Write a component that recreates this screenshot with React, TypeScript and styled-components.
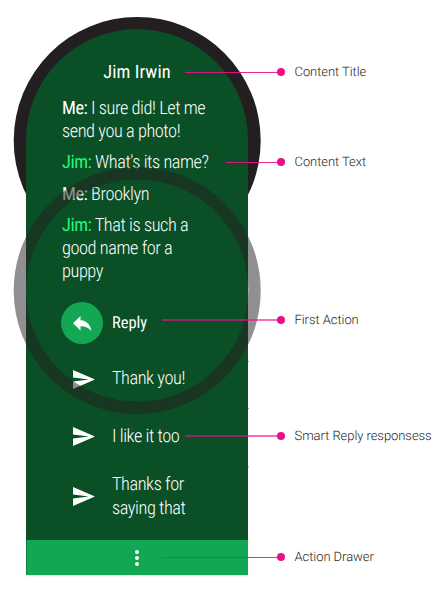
import React from "react";
import styled, { createGlobalStyle } from "styled-components";

const Global = createGlobalStyle`
  * { box-sizing: border-box; }
  body {
    margin: 0;
    background: #fff;
    font-family: Roboto, "Liberation Sans", sans-serif;
    text-rendering: geometricPrecision;
  }
`;

const Page = styled.main`
  position: relative;
  width: 447px;
  height: 597px;
  padding: 29px 0 0 26px;
  overflow: hidden;
`;

const Dial = styled.svg`
  position: absolute;
  left: 0;
  top: 0;
  width: 447px;
  height: 597px;
  pointer-events: none;
`;

const Shade = styled.div`
  position: relative;
  width: 222px;
  border-radius: 111px 111px 0 0;
  box-shadow: 0 2px 2px -1px rgba(0, 0, 0, 0.12);
`;

const Card = styled.section`
  display: flex;
  flex-direction: column;
  height: 546px;
  background: #0a4f26;
  border-radius: 111px 111px 0 0;
  color: #fff;
  font-weight: 300;
  font-stretch: 75%;
  font-size: 18.4px;
  letter-spacing: -0.46px;
  line-height: 23.2px;
  overflow: hidden;
`;

const Title = styled.h1`
  margin: 0;
  padding-top: 32px;
  height: 68px;
  text-align: center;
  font-size: 18.4px;
  line-height: 23px;
  font-weight: 430;
  letter-spacing: 0.1px;
`;

const Chat = styled.div`
  display: flex;
  flex-direction: column;
  gap: 8px;
  height: 203px;
  padding-left: 36px;
`;

const Message = styled.p`
  margin: 0;
  white-space: nowrap;
`;

const Sender = styled.span<{ $own?: boolean }>`
  color: ${(p) => (p.$own ? "#fff" : "#1dfb76")};
  font-weight: 420;
`;

const Action = styled.div<{ $height: number }>`
  display: grid;
  grid-template-columns: 42px 1fr;
  column-gap: 9px;
  align-items: center;
  height: ${(p) => p.$height}px;
  padding-left: 35px;
  white-space: nowrap;
`;

const ActionLabel = styled.span`
  padding-top: 1px;
`;

const ReplyLabel = styled.span`
  padding-top: 2px;
  font-size: 16.4px;
  font-weight: 450;
  letter-spacing: 0;
`;

const ReplyButton = styled.span`
  display: grid;
  place-items: center;
  width: 42px;
  height: 42px;
  border-radius: 50%;
  background: #13a653;
`;

const SendIcon = styled.svg`
  margin: 1px 0 0 12px;
  width: 22px;
  height: 19px;
`;

const Drawer = styled.footer`
  display: grid;
  place-items: center;
  height: 35px;
  margin-top: auto;
  padding-right: 1px;
  background: #13a653;
  border-left: 1px solid #10803f;
`;

const Callout = styled.div<{ $x: number; $y: number }>`
  position: absolute;
  left: ${(p) => p.$x}px;
  top: ${(p) => p.$y - 9}px;
  right: 0;
  height: 18px;
  display: flex;
  align-items: center;
`;

const Leader = styled.i<{ $end: number; $soft?: boolean }>`
  width: ${(p) => p.$end}px;
  height: ${(p) => (p.$soft ? 2 : 1)}px;
  background: #ec0f8c;
  opacity: ${(p) => (p.$soft ? 0.6 : 0.9)};
`;

const Dot = styled.i`
  width: 8px;
  height: 8px;
  margin-left: -1px;
  border-radius: 50%;
  background: #ec0f8c;
`;

const Label = styled.span`
  margin-left: 9.5px;
  padding-top: 2px;
  color: #231f20;
  font-size: 13px;
  font-weight: 300;
  letter-spacing: -0.06px;
  line-height: 18px;
  white-space: nowrap;
`;

const Send = () => (
  <SendIcon viewBox="0 0 22 19">
    <path d="M0 19 22 9.500 0 0v7.400l15.700 2.100L0 11.600z" fill="#fff" />
  </SendIcon>
);

const callouts = [
  { x: 185, y: 72, text: "Content Title", soft: false },
  { x: 226, y: 162, text: "Content Text", soft: false },
  { x: 162, y: 320, text: "First Action", soft: true },
  { x: 185, y: 436, text: "Smart Reply responsess", soft: true },
  { x: 162, y: 557, text: "Action Drawer", soft: false },
];

export default function App() {
  return (
    <>
      <Global />
      <Page>
        <Dial viewBox="0 0 447 597">
          <circle cx="137.200" cy="140.500" r="123.500" fill="#231f20" />
        </Dial>
        <Shade>
          <Card>
            <Title>Jim Irwin</Title>
            <Chat>
              <Message><Sender $own>Me:</Sender> I sure did! Let me<br />send you a photo!</Message>
              <Message><Sender>Jim:</Sender> What's its name?</Message>
              <Message><Sender $own>Me:</Sender> Brooklyn</Message>
              <Message><Sender>Jim:</Sender> That is such a<br />good name for a<br />puppy</Message>
            </Chat>
            <Action $height={46}>
              <ReplyButton>
                <svg width="19" height="15" viewBox="0 0 19 15"><path d="M7.500 4.100V0L0 7.200l7.500 7.200v-4.200c5.100 0 8.400 1.600 11 4.800C17.500 9.600 14.400 5.100 7.500 4.100z" fill="#fff" /></svg>
              </ReplyButton>
              <ReplyLabel>Reply</ReplyLabel>
            </Action>
            <Action $height={65}><Send /><ActionLabel>Thank you!</ActionLabel></Action>
            <Action $height={50}><Send /><ActionLabel>I like it too</ActionLabel></Action>
            <Action $height={70}><Send /><ActionLabel>Thanks for<br />saying that</ActionLabel></Action>
            <Drawer>
              <svg width="4" height="16" viewBox="0 0 4 16" fill="#fff"><circle cx="2" cy="2" r="2" /><circle cx="2" cy="8" r="2" /><circle cx="2" cy="14" r="2" /></svg>
            </Drawer>
          </Card>
        </Shade>
        <Dial viewBox="0 0 447 597">
          <circle cx="137.200" cy="290.500" r="117.300" fill="none" stroke="#231f20" strokeOpacity="0.5" strokeWidth="12.400" />
          <path d="M248 361.500h1M248 408.500h1M248 467h1" stroke="#9aa59e" />
        </Dial>
        {callouts.map((c) => (
          <Callout key={c.text} $x={c.x} $y={c.y}>
            <Leader $end={278 - c.x} $soft={c.soft} />
            <Dot />
            <Label>{c.text}</Label>
          </Callout>
        ))}
      </Page>
    </>
  );
}
